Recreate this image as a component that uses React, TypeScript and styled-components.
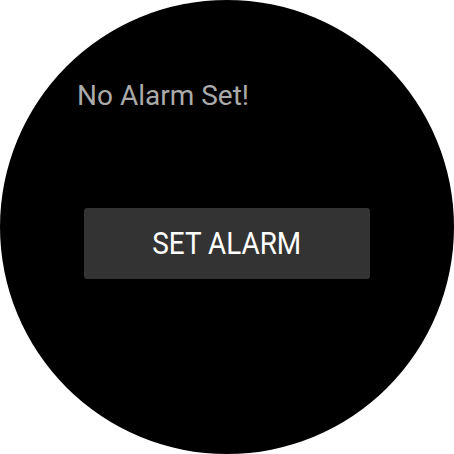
import styled, { createGlobalStyle } from "styled-components";

const GlobalStyle = createGlobalStyle`
  html, body {
    margin: 0;
    padding: 0;
    background: #ffffff;
  }
  body {
    font-family: Roboto, "Noto Sans", sans-serif;
  }
`;

const WatchFace = styled.div`
  width: 454px;
  height: 454px;
  border-radius: 50%;
  background: #000000;
  box-sizing: border-box;
  display: flex;
  flex-direction: column;
  padding: 76px 0 0 77px;
`;

const StatusText = styled.div`
  color: #aaaaaa;
  font-size: 28px;
  line-height: 40px;
  height: 40px;
`;

const ActionButton = styled.button`
  margin: 92px 0 0 7px;
  width: 286px;
  height: 71px;
  border: none;
  border-radius: 3px;
  background: #333333;
  color: #ffffff;
  font-family: Roboto, "Noto Sans", sans-serif;
  font-size: 31px;
  padding: 0;
  cursor: pointer;
`;

const ButtonLabel = styled.span`
  display: inline-block;
  transform: scaleX(0.9);
`;

export default function App() {
  return (
    <>
      <GlobalStyle />
      <WatchFace>
        <StatusText>No Alarm Set!</StatusText>
        <ActionButton>
          <ButtonLabel>SET ALARM</ButtonLabel>
        </ActionButton>
      </WatchFace>
    </>
  );
}
